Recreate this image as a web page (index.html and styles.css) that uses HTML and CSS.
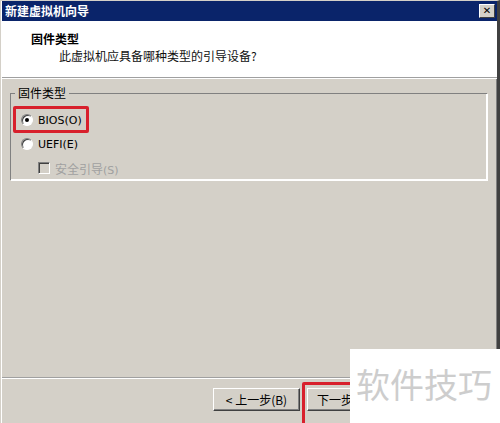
FILE: index.html
```html
<!DOCTYPE html>
<html lang="zh-CN">
<head>
    <meta charset="UTF-8">
    <title>新建虚拟机向导</title>
    <link rel="stylesheet" href="styles.css">
</head>
<body>
    <div class="window">
        <div class="titlebar">
            <span class="title-text">新建虚拟机向导</span>
            <span class="close-btn">✕</span>
        </div>
        <div class="header">
            <div class="header-title">固件类型</div>
            <div class="header-sub">此虚拟机应具备哪种类型的引导设备?</div>
        </div>
        <div class="sep"></div>
        <div class="content">
            <fieldset class="group">
                <legend>固件类型</legend>
                <label class="option">
                    <span class="radio checked"></span>
                    <span class="latin">BIOS(O)</span>
                </label>
                <label class="option">
                    <span class="radio"></span>
                    <span class="latin">UEFI(E)</span>
                </label>
                <label class="option sub disabled">
                    <span class="check"></span>
                    <span>安全引导<span class="latin">(S)</span></span>
                </label>
            </fieldset>
        </div>
        <div class="sep"></div>
        <div class="buttons">
            <button class="btn">&lt; 上一步(B)</button>
            <button class="btn next">下一步</button>
        </div>

        <!-- annotations drawn over the screenshot -->
        <div class="mark mark-bios"></div>
        <div class="mark mark-next"></div>
        <div class="watermark">软件技巧</div>
    </div>
</body>
</html>
```

FILE: styles.css
```css
* {
    margin: 0;
    padding: 0;
    box-sizing: border-box;
}

body {
    width: 500px;
    height: 423px;
    overflow: hidden;
    font-family: "Noto Sans CJK SC", "DejaVu Sans", sans-serif;
    font-size: 12px;
    color: #000;
    background: #d4d0c8;
}

.window {
    position: relative;
    width: 500px;
    height: 423px;
    display: flex;
    flex-direction: column;
    background: #d4d0c8;
    border-top: 1px solid #d4d0c8;
    border-left: 1px solid #d4d0c8;
    border-right: 3px solid #404040;
    box-shadow: inset 1px 0 #fff, inset -1px 0 #808080;
}

.titlebar {
    height: 20px;
    margin-left: 1px;
    background: #0a246a;
    display: flex;
    align-items: center;
    justify-content: space-between;
    padding: 0 2px 0 3px;
}

.title-text {
    color: #fff;
    font-weight: bold;
    font-size: 12px;
    line-height: 14px;
}

.close-btn {
    width: 16px;
    height: 14px;
    background: #d4d0c8;
    border-top: 1px solid #fff;
    border-left: 1px solid #fff;
    border-right: 1px solid #404040;
    border-bottom: 1px solid #404040;
    font-family: "DejaVu Sans", sans-serif;
    font-size: 10px;
    font-weight: bold;
    line-height: 12px;
    text-align: center;
}

.header {
    height: 56px;
    margin-left: 1px;
    background: #fff;
    padding: 10px 0 0 29px;
}

.header-title {
    font-weight: bold;
    line-height: 16px;
}

.header-sub {
    margin: 1px 0 0 28px;
    line-height: 16px;
    color: #111;
}

.sep {
    height: 2px;
    margin-left: 1px;
    border-top: 1px solid #a0a0a0;
    border-bottom: 1px solid #fff;
}

.content {
    flex: 1;
    padding: 8px 9px 0 9px;
}

.group {
    border: none;
    box-shadow: inset 1px 1px #808080, inset -1px -1px #fff, 1px 1px #fff;
    padding: 15px 0 0 11px;
    height: 87px;
    width: 477px;
    position: relative;
    margin-top: 6px;
}

.group legend {
    position: absolute;
    top: -7px;
    left: 5px;
    padding: 0 3px;
    background: #d4d0c8;
    line-height: 14px;
}

.option {
    display: flex;
    align-items: center;
    gap: 5px;
    height: 24px;
}

.option.sub {
    padding-left: 17px;
}

.option.disabled {
    color: #a0a0a0;
}

.latin {
    font-family: "DejaVu Sans", sans-serif;
    font-size: 11px;
}

.radio {
    flex: none;
    width: 12px;
    height: 12px;
    border-radius: 50%;
    background: #fff;
    border: 1px solid;
    border-color: #808080 #fff #fff #808080;
    box-shadow: inset 1px 1px #404040;
    position: relative;
}

.radio.checked::after {
    content: "";
    position: absolute;
    left: 3px;
    top: 3px;
    width: 4px;
    height: 4px;
    border-radius: 50%;
    background: #000;
}

.check {
    flex: none;
    width: 12px;
    height: 12px;
    background: #d4d0c8;
    border: 1px solid;
    border-color: #808080 #fff #fff #808080;
    box-shadow: inset 1px 1px #404040;
}

.buttons {
    height: 44px;
    display: flex;
    align-items: flex-start;
    padding: 9px 0 0 212px;
    gap: 7px;
}

.btn {
    width: 87px;
    height: 23px;
    background: #d4d0c8;
    font-family: "Noto Sans CJK SC", "DejaVu Sans", sans-serif;
    font-size: 12px;
    border: 1px solid;
    border-color: #fff #404040 #404040 #fff;
    box-shadow: inset -1px -1px #808080;
}

.btn.next {
    text-align: left;
    padding-left: 9px;
}

.mark {
    position: absolute;
    border: 3px solid #d8202c;
    border-radius: 2px;
}

.mark-bios {
    left: 12px;
    top: 105px;
    width: 76px;
    height: 27px;
}

.mark-next {
    left: 301px;
    top: 381px;
    width: 60px;
    height: 44px;
}

.watermark {
    position: absolute;
    left: 349px;
    top: 348px;
    width: 151px;
    height: 75px;
    background: #fff;
    color: #cdcdcd;
    font-size: 34px;
    line-height: 36px;
    padding: 17px 0 0 6px;
}
```
